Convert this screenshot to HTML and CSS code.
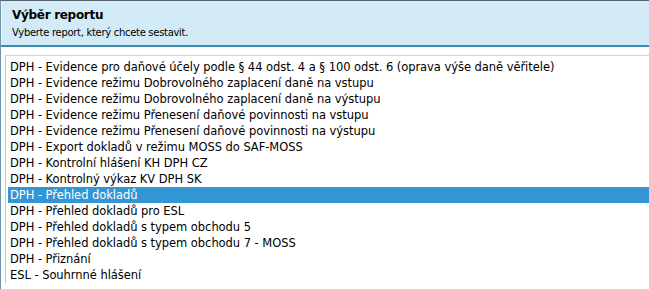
FILE: index.html
```html
<!DOCTYPE html>
<html lang="cs">
<head>
<meta charset="utf-8">
<title>Výběr reportu</title>
<link rel="stylesheet" href="styles.css">
</head>
<body>
<div class="panel">
  <div class="header">
    <div class="title">Výběr reportu</div>
    <div class="subtitle">Vyberte report, který chcete sestavit.</div>
  </div>
  <div class="content">
    <ul class="list">
      <li class="row">DPH - Evidence pro daňové účely podle § 44 odst. 4 a § 100 odst. 6 (oprava výše daně věřitele)</li>
      <li class="row">DPH - Evidence režimu Dobrovolného zaplacení daně na vstupu</li>
      <li class="row">DPH - Evidence režimu Dobrovolného zaplacení daně na výstupu</li>
      <li class="row">DPH - Evidence režimu Přenesení daňové povinnosti na vstupu</li>
      <li class="row">DPH - Evidence režimu Přenesení daňové povinnosti na výstupu</li>
      <li class="row">DPH - Export dokladů v režimu MOSS do SAF-MOSS</li>
      <li class="row">DPH - Kontrolní hlášení KH DPH CZ</li>
      <li class="row">DPH - Kontrolný výkaz KV DPH SK</li>
      <li class="row selected">DPH - Přehled dokladů</li>
      <li class="row">DPH - Přehled dokladů pro ESL</li>
      <li class="row">DPH - Přehled dokladů s typem obchodu 5</li>
      <li class="row">DPH - Přehled dokladů s typem obchodu 7 - MOSS</li>
      <li class="row">DPH - Přiznání</li>
      <li class="row">ESL - Souhrnné hlášení</li>
    </ul>
  </div>
</div>
</body>
</html>
```

FILE: styles.css
```css
html, body {
  margin: 0;
  padding: 0;
  background: #ffffff;
}
body {
  width: 649px;
  height: 289px;
  overflow: hidden;
  font-family: "DejaVu Sans", Verdana, sans-serif;
  font-size: 11px;
  color: #000000;
}
.panel {
  height: 288px;
  border-top: 1px solid #56656f;
  border-left: 1px solid #6f94ab;
  display: flex;
  flex-direction: column;
}
.header {
  height: 46px;
  flex: none;
  box-sizing: border-box;
  background: #d3ebf7;
  border-bottom: 2px solid #3c8db4;
  box-shadow: inset 1px 0 0 #eef7fc;
  padding: 6px 0 0 11px;
}
.title {
  font-weight: bold;
  font-size: 12px;
  line-height: 16px;
  letter-spacing: -0.3px;
}
.subtitle {
  font-size: 10px;
  line-height: 16px;
  margin-top: 2px;
  letter-spacing: -0.3px;
}
.content {
  flex: 1;
  padding: 8px 0 0 4px;
}
.list {
  list-style: none;
  margin: 0;
  padding: 3px 0 0 2px;
  border-top: 1px solid #d4d4d4;
  border-left: 1px solid #c6c6c6;
}
.row {
  height: 16px;
  line-height: 16px;
  padding-left: 2px;
  white-space: nowrap;
  font-size: 11.5px;
  letter-spacing: -0.05px;
}
.selected {
  background: #3396d4;
  color: #ffffff;
}
```
